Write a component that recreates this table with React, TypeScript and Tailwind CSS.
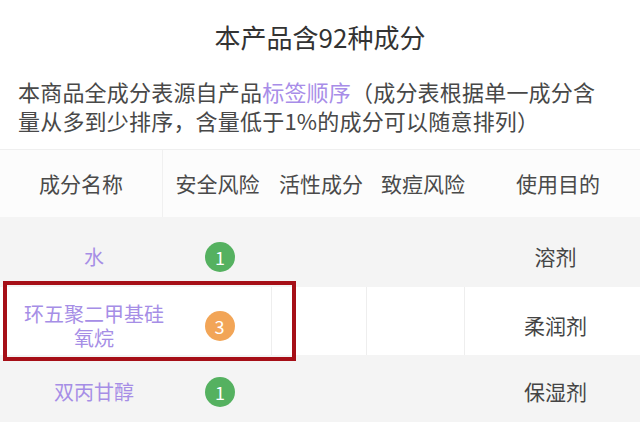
import React from "react";

type Row = {
  name: string[];
  risk: number;
  use: string;
  white?: boolean;
  highlight?: boolean;
};

const rows: Row[] = [
  { name: ["水"], risk: 1, use: "溶剂" },
  { name: ["环五聚二甲基硅", "氧烷"], risk: 3, use: "柔润剂", white: true, highlight: true },
  { name: ["双丙甘醇"], risk: 1, use: "保湿剂" },
];

const Badge = ({ n }: { n: number }) => (
  <span
    className={
      "flex h-[30px] w-[30px] items-center justify-center rounded-full text-[18px] leading-none text-white " +
      (n === 1 ? "bg-[#55b160]" : "bg-[#f2a557]")
    }
  >
    {n}
  </span>
);

const DataRow = ({ row, pad }: { row: Row; pad: string }) => (
  <div
    className={
      "relative grid grid-cols-[188px_84px_95px_98px_1fr] " +
      (row.white ? "h-[68px] bg-white" : "h-[70px] bg-[#f4f4f4]")
    }
  >
    <div className={"flex flex-col items-center justify-center text-[20px] leading-[24px] text-[#a68ee6] " + pad}>
      {row.name.map((n) => (
        <span key={n}>{n}</span>
      ))}
    </div>
    <div className={"flex items-center justify-center pr-[20px] " + pad + (row.white ? " border-r border-[#eeeeee]" : "")}>
      <Badge n={row.risk} />
    </div>
    <div className={row.white ? "border-r border-[#eeeeee]" : ""} />
    <div className={row.white ? "border-r border-[#eeeeee]" : ""} />
    <div className={"flex items-center justify-center pl-[6px] text-[21px] text-[#444] " + pad}>{row.use}</div>
    {row.highlight && (
      <div className="absolute left-[3px] top-[-6px] z-10 h-[80px] w-[293px] border-[4px] border-[#a60f17]" />
    )}
  </div>
);

export default function App() {
  return (
    <div
      className="h-[422px] w-[640px] overflow-hidden bg-white"
      style={{ fontFamily: '"Noto Sans CJK SC", "Noto Sans", sans-serif' }}
    >
      <div className="flex h-[72px] items-center justify-center text-[26px] text-[#333]">本产品含92种成分</div>
      <div className="mt-[5px] border-b border-[#efefef] px-[18px] pb-[14px] text-[22px] leading-[29px] tracking-[0.2px] text-[#484848]">
        <div className="whitespace-nowrap">
          本商品全成分表源自产品<span className="text-[#a88de8]">标签顺序</span>（成分表根据单一成分含
        </div>
        <div className="whitespace-nowrap">量从多到少排序，含量低于1%的成分可以随意排列）</div>
      </div>
      <div className="grid h-[67px] grid-cols-[163px_109px_98px_106px_1fr] bg-[#fcfcfc] text-[21px] text-[#4a4a4a]">
        <div className="flex items-center justify-center border-r border-[#f0f0f0]">成分名称</div>
        <div className="flex items-center justify-center">安全风险</div>
        <div className="flex items-center justify-center">活性成分</div>
        <div className="flex items-center justify-center">致痘风险</div>
        <div className="flex items-center justify-center">使用目的</div>
      </div>
      <DataRow row={rows[0]} pad="pt-[10px]" />
      <DataRow row={rows[1]} pad="pt-[10px]" />
      <DataRow row={rows[2]} pad="pt-[4px]" />
    </div>
  );
}
